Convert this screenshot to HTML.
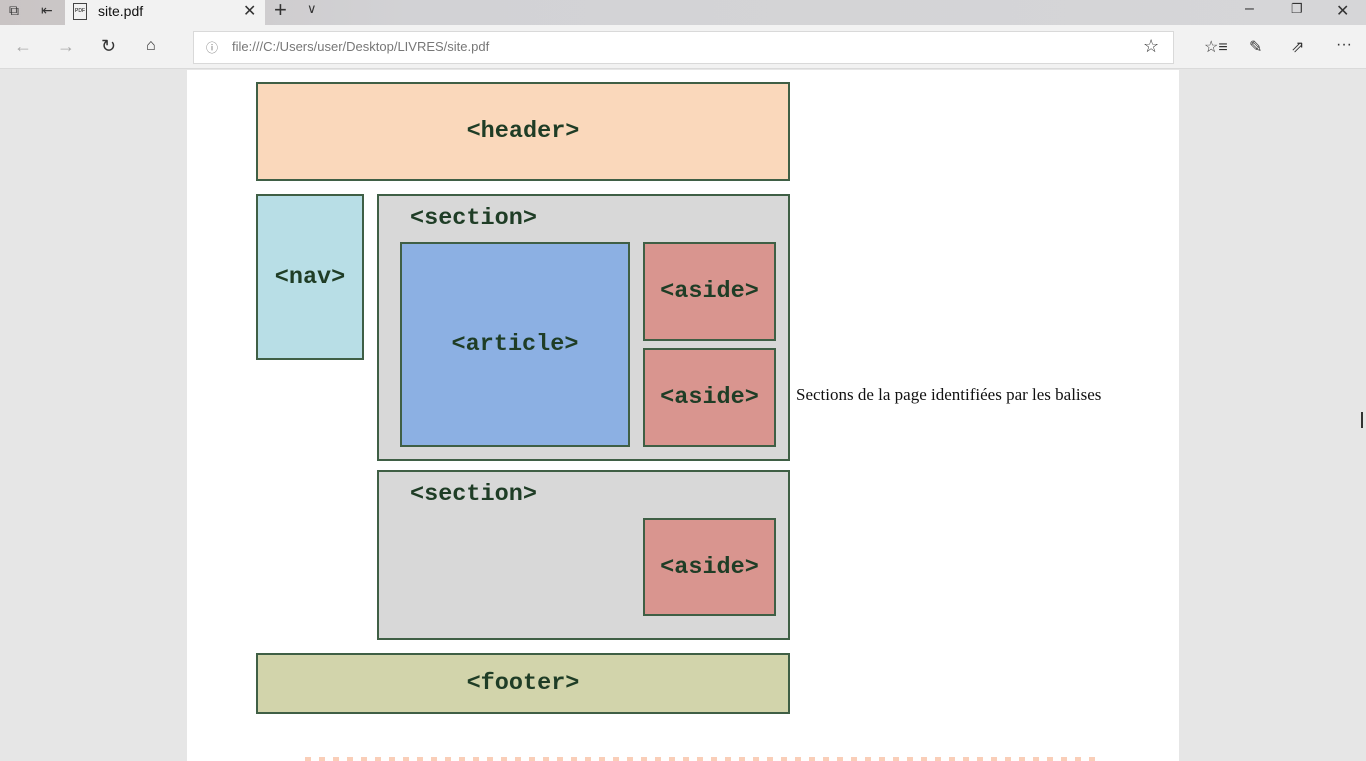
<!DOCTYPE html><html><head><style>
*{margin:0;padding:0;box-sizing:border-box}
body{width:1366px;height:761px;overflow:hidden;background:#e6e6e6;font-family:"Liberation Sans",sans-serif;position:relative}
.a{position:absolute}
.box{position:absolute;border:2px solid #3f5f45;display:flex;align-items:center;justify-content:center;font-family:"Liberation Mono",monospace;font-weight:bold;font-size:23.5px;color:#1f3d26}
.ic{position:absolute;color:#333;font-size:16px}
</style></head><body>
<div class="a" style="left:0;top:0;width:1366px;height:25px;background:linear-gradient(90deg,#c9c4c4,#d2d2d5 30%,#d6d6d8)"></div>
<div class="a" style="left:65px;top:0;width:200px;height:25px;background:#f2f2f2"></div>
<div class="ic" style="left:9px;top:2px;font-size:14px">⧉</div>
<div class="ic" style="left:41px;top:2px;font-size:14px">⇤</div>
<div class="a" style="left:73px;top:3px;width:14px;height:17px;border:1px solid #444;font-size:5px;text-align:center;line-height:15px">PDF</div>
<div class="a" style="left:98px;top:3px;font-size:14px;color:#111">site.pdf</div>
<div class="ic" style="left:243px;top:1px;font-size:16px">✕</div>
<div class="ic" style="left:274px;top:-3px;font-size:22px;font-weight:300">+</div>
<div class="ic" style="left:307px;top:1px;font-size:13px">∨</div>
<div class="ic" style="left:1245px;top:0px">–</div>
<div class="ic" style="left:1291px;top:1px;font-size:13px">❐</div>
<div class="ic" style="left:1336px;top:1px">✕</div>
<div class="a" style="left:0;top:25px;width:1366px;height:44px;background:#f2f2f2;border-bottom:1px solid #dadada"></div>
<div class="ic" style="left:14px;top:36px;color:#aaa;font-size:18px">←</div>
<div class="ic" style="left:57px;top:36px;color:#aaa;font-size:18px">→</div>
<div class="ic" style="left:101px;top:36px;font-size:18px">↻</div>
<div class="ic" style="left:146px;top:37px;font-size:16px">⌂</div>
<div class="a" style="left:193px;top:31px;width:981px;height:33px;background:#fff;border:1px solid #d9d9d9"></div>
<div class="ic" style="left:206px;top:39px;font-size:12px;color:#777">ⓘ</div>
<div class="a" style="left:232px;top:39px;font-size:13px;color:#777">file:///C:/Users/user/Desktop/LIVRES/site.pdf</div>
<div class="ic" style="left:1143px;top:36px;font-size:18px">☆</div>
<div class="ic" style="left:1204px;top:37px;font-size:16px">☆≡</div>
<div class="ic" style="left:1249px;top:37px;font-size:16px">✎</div>
<div class="ic" style="left:1291px;top:37px;font-size:16px">⇗</div>
<div class="ic" style="left:1336px;top:36px;font-size:16px">···</div>
<div class="a" style="left:187px;top:70px;width:992px;height:691px;background:#fff"></div>
<div class="box" style="left:256px;top:82px;width:534px;height:99px;background:#fad8bb">&lt;header&gt;</div>
<div class="box" style="left:256px;top:194px;width:108px;height:166px;background:#b8dee6">&lt;nav&gt;</div>
<div class="box" style="left:377px;top:194px;width:413px;height:267px;background:#d8d8d8;align-items:flex-start;justify-content:flex-start;padding:9px 0 0 31px">&lt;section&gt;</div>
<div class="box" style="left:400px;top:242px;width:230px;height:205px;background:#8cb0e3">&lt;article&gt;</div>
<div class="box" style="left:643px;top:242px;width:133px;height:99px;background:#d9958f">&lt;aside&gt;</div>
<div class="box" style="left:643px;top:348px;width:133px;height:99px;background:#d9958f">&lt;aside&gt;</div>
<div class="box" style="left:377px;top:470px;width:413px;height:170px;background:#d8d8d8;align-items:flex-start;justify-content:flex-start;padding:9px 0 0 31px">&lt;section&gt;</div>
<div class="box" style="left:643px;top:518px;width:133px;height:98px;background:#d9958f">&lt;aside&gt;</div>
<div class="box" style="left:256px;top:653px;width:534px;height:61px;background:#d2d4ab">&lt;footer&gt;</div>
<div class="a" style="left:796px;top:385px;font-family:'Liberation Serif',serif;font-size:17px;color:#111">Sections de la page identifiées par les balises</div>
<div class="a" style="left:305px;top:757px;width:790px;height:4px;background:repeating-linear-gradient(90deg,#f7b99a 0 6px,transparent 6px 14px);opacity:.7"></div>
<div class="a" style="left:1361px;top:412px;width:2px;height:16px;background:#333"></div>
</body></html>
